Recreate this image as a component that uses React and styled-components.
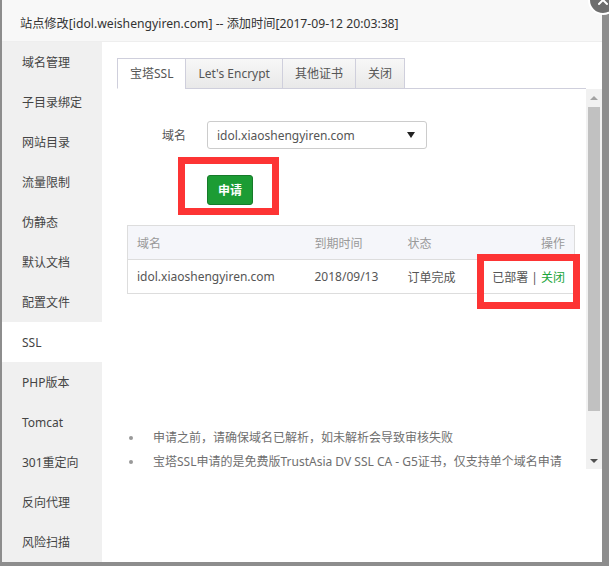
import React from 'react';
import styled, { createGlobalStyle } from 'styled-components';
import { X } from 'lucide-react';

const GlobalStyle = createGlobalStyle`
  html, body {
    margin: 0;
    padding: 0;
    height: 100%;
    overflow: hidden;
    background: #8d8d8d;
  }
  body {
    font-family: "Noto Sans", "Noto Sans CJK SC", sans-serif;
    font-size: 12px;
  }
  * { box-sizing: border-box; }
`

const Page = styled.div`
  padding-left: 2px;
  height: 566px;
`

const Dialog = styled.div`
  position: relative;
  width: 600px;
  height: 562px;
  background: #fff;
  display: flex;
  flex-direction: column;
`

const CloseButton = styled.div`
  position: absolute;
  top: -15px;
  right: -16px;
  width: 30px;
  height: 30px;
  border-radius: 50%;
  background: #6e6e6e;
  border: 2px solid #fff;
  display: flex;
  align-items: center;
  justify-content: center;
  color: #fff;
`

const Title = styled.div`
  height: 42px;
  padding: 4px 0 0 18px;
  display: flex;
  align-items: center;
  background: #f8f8f8;
  border-bottom: 1px solid #eee;
  color: #333;
  font-size: 12.2px;
  white-space: nowrap;
`

const Body = styled.div`
  flex: 1;
  display: flex;
  min-height: 0;
`

const Menu = styled.ul`
  width: 100px;
  margin: 0;
  padding: 0;
  list-style: none;
  background: #f0f0f0;
`

const MenuItem = styled.li`
  height: 40px;
  line-height: 41px;
  padding-left: 20px;
  color: #444;
  background: ${p => (p.active ? '#fff' : 'transparent')};
`

const Content = styled.div`
  flex: 1;
  padding: 16px 0 0 15px;
  display: flex;
  flex-direction: column;
`

const TabBar = styled.div`
  display: flex;
  height: 31px;
  margin-right: 16px;
  border-bottom: 1px solid #cfcfdc;
`

const Tab = styled.div`
  height: 31px;
  line-height: 30px;
  padding: 0 12px;
  border: 1px solid #cfcfdc;
  border-right: ${p => (p.last ? '1px solid #cfcfdc' : 'none')};
  color: #555;
  background: ${p => (p.active ? '#fff' : 'linear-gradient(#f7f7f7, #e9e9e9)')};
  border-bottom-color: ${p => (p.active ? '#fff' : '#cfcfdc')};
`

const ScrollArea = styled.div`
  display: flex;
  height: 380px;
`

const ScrollContent = styled.div`
  flex: 1;
  min-width: 0;
  overflow: hidden;
`

const ScrollBar = styled.div`
  width: 16px;
  background: #f1f1f1;
  display: flex;
  flex-direction: column;
`

const ArrowButton = styled.div`
  height: 17px;
  display: flex;
  align-items: center;
  justify-content: center;
`

const Arrow = styled.span`
  width: 0;
  height: 0;
  border-left: 4px solid transparent;
  border-right: 4px solid transparent;
  border-bottom: ${p => (p.down ? 'none' : '4px solid #a3a3a3')};
  border-top: ${p => (p.down ? '4px solid #505050' : 'none')};
`

const Thumb = styled.div`
  height: 304px;
  margin: 1px 2px 0;
  background: #c1c1c1;
`

const Track = styled.div`
  flex: 1;
`

const Inner = styled.div`
  position: relative;
  padding: 32px 0 48px;
`

const FormRow = styled.div`
  display: flex;
  align-items: center;
  height: 28px;
`

const Label = styled.span`
  width: 69px;
  margin-right: 21px;
  text-align: right;
  color: #555;
`

const Select = styled.div`
  width: 220px;
  height: 28px;
  border: 1px solid #ccc;
  border-radius: 3px;
  padding: 0 11px 0 9px;
  display: flex;
  align-items: center;
  justify-content: space-between;
  color: #555;
`

const Caret = styled.span`
  width: 0;
  height: 0;
  border-left: 4px solid transparent;
  border-right: 4px solid transparent;
  border-top: 6px solid #222;
`

const Highlight = styled.div`
  width: fit-content;
  margin: 8px 0 0 61px;
  border: 7px solid #fd3434;
  padding: 11px 19px 3px 22px;
`

const GreenButton = styled.button`
  display: block;
  width: 46px;
  height: 30px;
  border: 1px solid #177a2a;
  border-radius: 3px;
  background: #1c9c34;
  color: #fff;
  font-family: inherit;
  font-size: 12px;
  font-weight: bold;
  padding: 0;
`

const Table = styled.table`
  margin: 10px 10px 0 10px;
  width: calc(100% - 21px);
  border-collapse: collapse;
  border: 1px solid #ddd;
`

const Th = styled.th`
  height: 34px;
  padding: 0 9px;
  background: #f5f6fa;
  font-weight: normal;
  color: #999;
  text-align: ${p => p.align || 'left'};
  width: ${p => p.w || 'auto'};
  border-bottom: 1px solid #ddd;
`

const Td = styled.td`
  height: 34px;
  padding: 0 9px;
  color: #555;
  text-align: ${p => p.align || 'left'};
`

const GreenLink = styled.span`
  color: #20a53a;
`

const MarkBox = styled.div`
  position: absolute;
  left: 360px;
  top: 165px;
  width: 103px;
  height: 55px;
  border: 7px solid #fd3434;
  pointer-events: none;
`

const Tips = styled.ul`
  list-style: none;
  margin: 132px 0 0 0;
  padding: 0;
`

const Tip = styled.li`
  position: relative;
  line-height: 24px;
  padding-left: 36px;
  color: #6f6f6f;
  white-space: nowrap;

  &::before {
    content: '';
    position: absolute;
    left: 12px;
    top: 10px;
    width: 4px;
    height: 4px;
    border-radius: 50%;
    background: #999;
  }
`

const menuItems = [
  '域名管理', '子目录绑定', '网站目录', '流量限制', '伪静态', '默认文档',
  '配置文件', 'SSL', 'PHP版本', 'Tomcat', '301重定向', '反向代理', '风险扫描',
]

const tabs = ['宝塔SSL', "Let's Encrypt", '其他证书', '关闭']

export default function App() {
  return (
    <>
      <GlobalStyle />
      <Page>
        <Dialog>
          <CloseButton>
            <X size={16} strokeWidth={3} />
          </CloseButton>
          <Title>站点修改[idol.weishengyiren.com] -- 添加时间[2017-09-12 20:03:38]</Title>
          <Body>
            <Menu>
              {menuItems.map(item => (
                <MenuItem key={item} active={item === 'SSL'}>{item}</MenuItem>
              ))}
            </Menu>
            <Content>
              <TabBar>
                {tabs.map((t, i) => (
                  <Tab key={t} active={i === 0} last={i === tabs.length - 1}>{t}</Tab>
                ))}
              </TabBar>
              <ScrollArea>
                <ScrollContent>
                  <Inner>
                    <FormRow>
                      <Label>域名</Label>
                      <Select>
                        <span>idol.xiaoshengyiren.com</span>
                        <Caret />
                      </Select>
                    </FormRow>
                    <Highlight>
                      <GreenButton>申请</GreenButton>
                    </Highlight>
                    <Table>
                      <thead>
                        <tr>
                          <Th w="178px">域名</Th>
                          <Th w="93px">到期时间</Th>
                          <Th w="80px">状态</Th>
                          <Th align="right">操作</Th>
                        </tr>
                      </thead>
                      <tbody>
                        <tr>
                          <Td>idol.xiaoshengyiren.com</Td>
                          <Td>2018/09/13</Td>
                          <Td>订单完成</Td>
                          <Td align="right">已部署 | <GreenLink>关闭</GreenLink></Td>
                        </tr>
                      </tbody>
                    </Table>
                    <MarkBox />
                    <Tips>
                      <Tip>申请之前，请确保域名已解析，如未解析会导致审核失败</Tip>
                      <Tip>宝塔SSL申请的是免费版TrustAsia DV SSL CA - G5证书，仅支持单个域名申请</Tip>
                    </Tips>
                  </Inner>
                </ScrollContent>
                <ScrollBar>
                  <ArrowButton><Arrow /></ArrowButton>
                  <Thumb />
                  <Track />
                  <ArrowButton><Arrow down /></ArrowButton>
                </ScrollBar>
              </ScrollArea>
            </Content>
          </Body>
        </Dialog>
      </Page>
    </>
  );
}
